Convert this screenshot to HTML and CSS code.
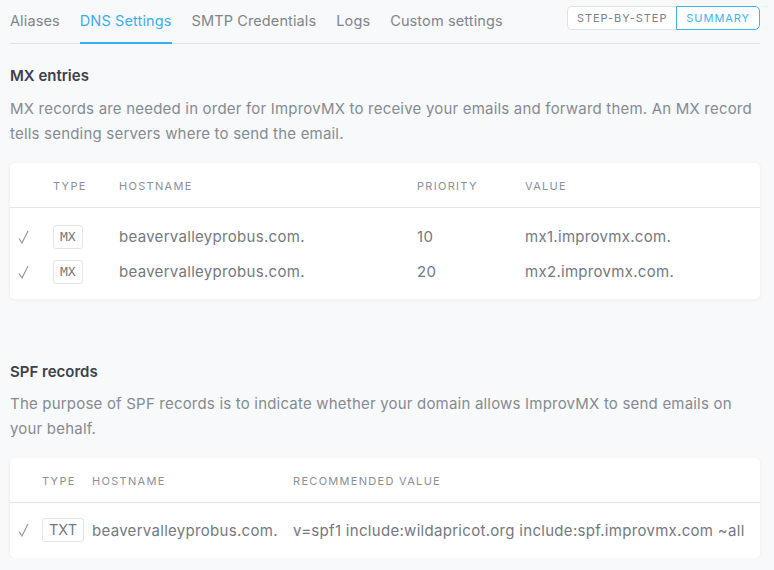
FILE: index.html
```html
<!DOCTYPE html>
<html>
<head>
<meta charset="utf-8">
<link rel="stylesheet" href="styles.css">
</head>
<body>
<div class="page">
  <div class="topbar">
    <nav class="tabs">
      <a class="tab">Aliases</a>
      <a class="tab active">DNS Settings</a>
      <a class="tab">SMTP Credentials</a>
      <a class="tab">Logs</a>
      <a class="tab">Custom settings</a>
    </nav>
    <div class="toggle">
      <button class="tbtn">STEP-BY-STEP</button>
      <button class="tbtn on">SUMMARY</button>
    </div>
  </div>

  <section class="sec mx">
    <h2>MX entries</h2>
    <p>MX records are needed in order for ImprovMX to receive your emails and forward them. An MX record tells sending servers where to send the email.</p>
    <div class="card c1">
      <table class="tbl t1">
        <thead>
          <tr><th class="c-chk"></th><th class="c-type">TYPE</th><th class="c-host">HOSTNAME</th><th class="c-pri">PRIORITY</th><th>VALUE</th></tr>
        </thead>
        <tbody>
          <tr><td class="chk"><svg class="ck" width="11" height="14" viewBox="0 0 11 14"><path d="M1 8.5 L4 13 L10 1" fill="none" stroke="#8e949a" stroke-width="1.1"/></svg></td><td><span class="badge mono">MX</span></td><td>beavervalleyprobus.com.</td><td>10</td><td>mx1.improvmx.com.</td></tr>
          <tr><td class="chk"><svg class="ck" width="11" height="14" viewBox="0 0 11 14"><path d="M1 8.5 L4 13 L10 1" fill="none" stroke="#8e949a" stroke-width="1.1"/></svg></td><td><span class="badge mono">MX</span></td><td>beavervalleyprobus.com.</td><td>20</td><td>mx2.improvmx.com.</td></tr>
        </tbody>
      </table>
    </div>
  </section>

  <section class="sec spf">
    <h2>SPF records</h2>
    <p>The purpose of SPF records is to indicate whether your domain allows ImprovMX to send emails on your behalf.</p>
    <div class="card c2">
      <table class="tbl t2">
        <thead>
          <tr><th class="c-chk"></th><th class="c-type">TYPE</th><th class="c-host">HOSTNAME</th><th>RECOMMENDED VALUE</th></tr>
        </thead>
        <tbody>
          <tr><td class="chk"><svg class="ck" width="11" height="14" viewBox="0 0 11 14"><path d="M1 8.5 L4 13 L10 1" fill="none" stroke="#8e949a" stroke-width="1.1"/></svg></td><td><span class="badge">TXT</span></td><td>beavervalleyprobus.com.</td><td>v=spf1 include:wildapricot.org include:spf.improvmx.com ~all</td></tr>
        </tbody>
      </table>
    </div>
  </section>
</div>
</body>
</html>
```

FILE: styles.css
```css
* { box-sizing: border-box; }
html, body { margin: 0; padding: 0; }
body {
  background: #f8f9fa;
  font-family: "Inter", "Noto Sans", sans-serif;
  color: #80868e;
  font-size: 15px;
}
.page { padding: 0 14px 0 10px; }

.topbar {
  display: flex;
  justify-content: space-between;
  align-items: flex-start;
  border-bottom: 1px solid #dfe2e6;
  height: 44px;
}
.tabs { display: flex; gap: 20px; }
.tab {
  display: block;
  font-size: 14.5px;
  letter-spacing: 0.12px;
  line-height: 20px;
  padding: 11px 0 11px;
  color: #7f858c;
  border-bottom: 2px solid transparent;
}
.tab.active { color: #3aaef2; border-bottom-color: #3aaef2; }

.toggle { display: flex; margin-top: 6px; }
.tbtn {
  font-family: inherit;
  font-size: 11px;
  letter-spacing: 0.95px;
  height: 24px;
  background: #fff;
  color: #7a8087;
  border: 1px solid #e0e3e6;
  padding: 0 9px;
  margin: 0;
  white-space: nowrap;
}
.tbtn:first-child { border-radius: 5px 0 0 5px; border-right: none; }
.tbtn.on { color: #40b2f4; border-color: #40b2f4; border-radius: 0 5px 5px 0; }

.sec h2 {
  margin: 0;
  font-size: 15px;
  font-weight: 600;
  color: #3c4249;
  line-height: 20px;
}
.sec p {
  margin: 10px 0 0;
  line-height: 25px;
  font-size: 15px;
  letter-spacing: 0.2px;
  color: #858b92;
}
.mx { padding-top: 22px; }
.mx .card { margin-top: 17px; }
.spf { padding-top: 63px; }
.spf p { margin-top: 9px; }
.spf .card { margin-top: 17px; }

.card {
  background: #fff;
  border-radius: 5px;
  box-shadow: 0 1px 4px rgba(30, 40, 60, 0.06);
}
.c1 { padding-bottom: 10px; }
.c2 { padding-bottom: 0; }
.tbl {
  width: 100%;
  border-collapse: collapse;
  table-layout: fixed;
}
.tbl th {
  text-align: left;
  font-size: 11px;
  font-weight: 400;
  letter-spacing: 1.3px;
  color: #8a9097;
  height: 44px;
  padding: 3px 0 0 7px;
  border-bottom: 1px solid #e3e5ea;
}
.tbl td {
  padding: 0 0 0 7px;
  height: 35px;
  color: #737981;
  white-space: nowrap;
  letter-spacing: 0.3px;
}
.t1 tbody tr:first-child td { padding-top: 12px; height: 47px; }
.tbl td.chk { padding-left: 8px; }
.ck { display: block; }

.t1 .c-chk { width: 36px; }
.t1 .c-type { width: 66px; }
.t1 .c-host { width: 298px; }
.t1 .c-pri { width: 108px; }

.t2 .c-chk { width: 25px; }
.t2 .c-type { width: 50px; }
.t2 .c-host { width: 201px; }
.t2 tbody tr:first-child td { padding-top: 0; height: 56px; }

.badge {
  display: inline-block;
  vertical-align: middle;
  border: 1px solid #e1e3e7;
  border-radius: 3px;
  padding: 0 6px;
  line-height: 22px;
  font-size: 14.5px;
  letter-spacing: 0;
  color: #737981;
}
.badge.mono { font-family: "DejaVu Sans Mono", monospace; font-size: 13px; }
```
